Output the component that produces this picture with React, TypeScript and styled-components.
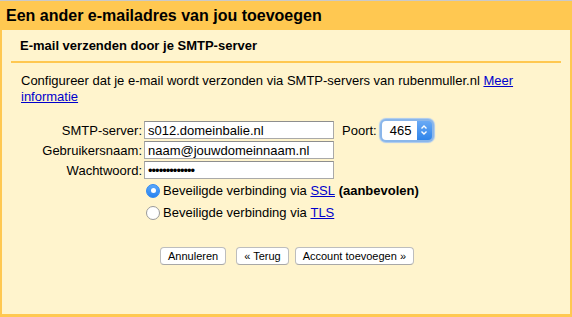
import styled, { createGlobalStyle } from "styled-components";

const GlobalStyle = createGlobalStyle`
  html, body {
    margin: 0;
    padding: 0;
    background: #ffffff;
  }
  body {
    font-family: "Liberation Sans", Arial, sans-serif;
    color: #000;
  }
`;

const orange = "#ffc851";
const cream = "#fff4cd";

const Frame = styled.div`
  width: 572px;
  height: 317px;
  box-sizing: border-box;
  border-top: 1px solid #c9c9c9;
  background: ${orange};
  display: flex;
  flex-direction: column;
  padding: 0 2px 3px 2px;
`;

const Title = styled.h1`
  margin: 0;
  height: 29px;
  display: flex;
  align-items: center;
  padding-left: 4px;
  font-size: 16px;
  font-weight: bold;
`;

const Panel = styled.div`
  flex: 1;
  background: ${cream};
  padding: 0 9px;
  display: flex;
  flex-direction: column;
`;

const SubTitle = styled.h2`
  margin: 0;
  padding: 8px 0 7px 9px;
  font-size: 13px;
  line-height: 16px;
  font-weight: bold;
  border-bottom: 2px solid ${orange};
`;

const Intro = styled.p`
  margin: 10px 0 0 10px;
  width: 500px;
  font-size: 13px;
  line-height: 16px;
`;

const Link = styled.a`
  color: #0000cc;
  text-decoration: underline;
`;

const FormGrid = styled.div`
  margin: 15px 0 0 -9px;
  display: grid;
  grid-template-columns: 140px 190px max-content max-content;
  justify-content: start;
  grid-auto-rows: 20px;
  column-gap: 2px;
  align-items: center;
  font-size: 13px;
`;

const Label = styled.label<{ $left?: boolean }>`
  text-align: ${(p) => (p.$left ? "left" : "right")};
  margin-left: ${(p) => (p.$left ? "6px" : "0")};
  white-space: nowrap;
`;

const TextInput = styled.input`
  box-sizing: border-box;
  width: 190px;
  height: 18px;
  margin: 0;
  padding: 0 3px;
  border: 1px solid #a9a9a9;
  border-top-color: #8e8e8e;
  background: #fff;
  font-family: "Liberation Sans", Arial, sans-serif;
  font-size: 13px;
  color: #000;
  outline: none;
`;

const Password = styled(TextInput)`
  font-size: 13px;
  letter-spacing: -1px;
`;

const Select = styled.div`
  box-sizing: border-box;
  width: 54px;
  height: 23px;
  margin-left: 1px;
  padding: 2px;
  border-radius: 6px;
  background: #8ab6ea;
  box-shadow: 0 0 1px 1px #a9c9f1;
  display: flex;
`;

const SelectValue = styled.div`
  flex: 1;
  background: #fff;
  border-radius: 4px 0 0 4px;
  padding-left: 8px;
  display: flex;
  align-items: center;
  font-size: 13px;
`;

const SelectArrows = styled.div`
  width: 15px;
  border-radius: 0 4px 4px 0;
  background: linear-gradient(#6aaaf5, #2f84ea);
  display: flex;
  align-items: center;
  justify-content: center;
`;

const RadioGroup = styled.div`
  margin-left: -9px;
  display: grid;
  grid-template-columns: 142px auto;
  row-gap: 1px;
`;

const RadioRow = styled.label`
  grid-column: 2;
  display: flex;
  align-items: center;
  height: 21px;
  font-size: 13px;
  white-space: nowrap;
`;

const Radio = styled.span<{ $on?: boolean }>`
  box-sizing: border-box;
  width: 14px;
  height: 14px;
  margin: 0 3px 0 2px;
  border-radius: 50%;
  border: 1px solid ${(p) => (p.$on ? "#2f88f2" : "#9a9a9a")};
  background: ${(p) => (p.$on ? "linear-gradient(#5aa8fa, #2882f0)" : "#fff")};
  display: flex;
  align-items: center;
  justify-content: center;

  &::after {
    content: "";
    width: 5px;
    height: 5px;
    border-radius: 50%;
    background: #fff;
    display: ${(p) => (p.$on ? "block" : "none")};
  }
`;

const Buttons = styled.div`
  display: flex;
  margin: 24px 0 0 149px;
`;

const Button = styled.button<{ $gap?: number }>`
  height: 18px;
  margin: 0 0 0 ${(p) => p.$gap ?? 0}px;
  padding: 0 7px;
  background: #fff;
  border: 1px solid #bdbdbd;
  border-bottom-color: #a8a8a8;
  border-radius: 4px;
  font-family: "Liberation Sans", Arial, sans-serif;
  font-size: 11px;
  color: #000;
`;

export default function App() {
  return (
    <>
      <GlobalStyle />
      <Frame>
        <Title>Een ander e-mailadres van jou toevoegen</Title>
        <Panel>
          <SubTitle>E-mail verzenden door je SMTP-server</SubTitle>
          <Intro>
            Configureer dat je e-mail wordt verzonden via SMTP-servers van rubenmuller.nl{" "}
            <Link href="#">Meer informatie</Link>
          </Intro>
          <FormGrid>
            <Label>SMTP-server:</Label>
            <TextInput readOnly value="s012.domeinbalie.nl" />
            <Label $left>Poort:</Label>
            <Select>
              <SelectValue>465</SelectValue>
              <SelectArrows>
                <svg width="8" height="12" viewBox="0 0 8 12">
                  <path d="M1.5 4.5 L4 2 L6.5 4.5 M1.5 7.5 L4 10 L6.5 7.5" fill="none" stroke="#fff" strokeWidth="1.4" />
                </svg>
              </SelectArrows>
            </Select>
            <Label>Gebruikersnaam:</Label>
            <TextInput readOnly value="naam@jouwdomeinnaam.nl" />
            <span />
            <span />
            <Label>Wachtwoord:</Label>
            <Password readOnly value="•••••••••••••" />
            <span />
            <span />
          </FormGrid>
          <RadioGroup>
            <RadioRow>
              <Radio $on />
              Beveiligde verbinding via&nbsp;<Link href="#">SSL</Link>&nbsp;<b>(aanbevolen)</b>
            </RadioRow>
            <RadioRow>
              <Radio />
              Beveiligde verbinding via&nbsp;<Link href="#">TLS</Link>
            </RadioRow>
          </RadioGroup>
          <Buttons>
            <Button>Annuleren</Button>
            <Button $gap={10}>« Terug</Button>
            <Button $gap={6}>Account toevoegen »</Button>
          </Buttons>
        </Panel>
      </Frame>
    </>
  );
}
